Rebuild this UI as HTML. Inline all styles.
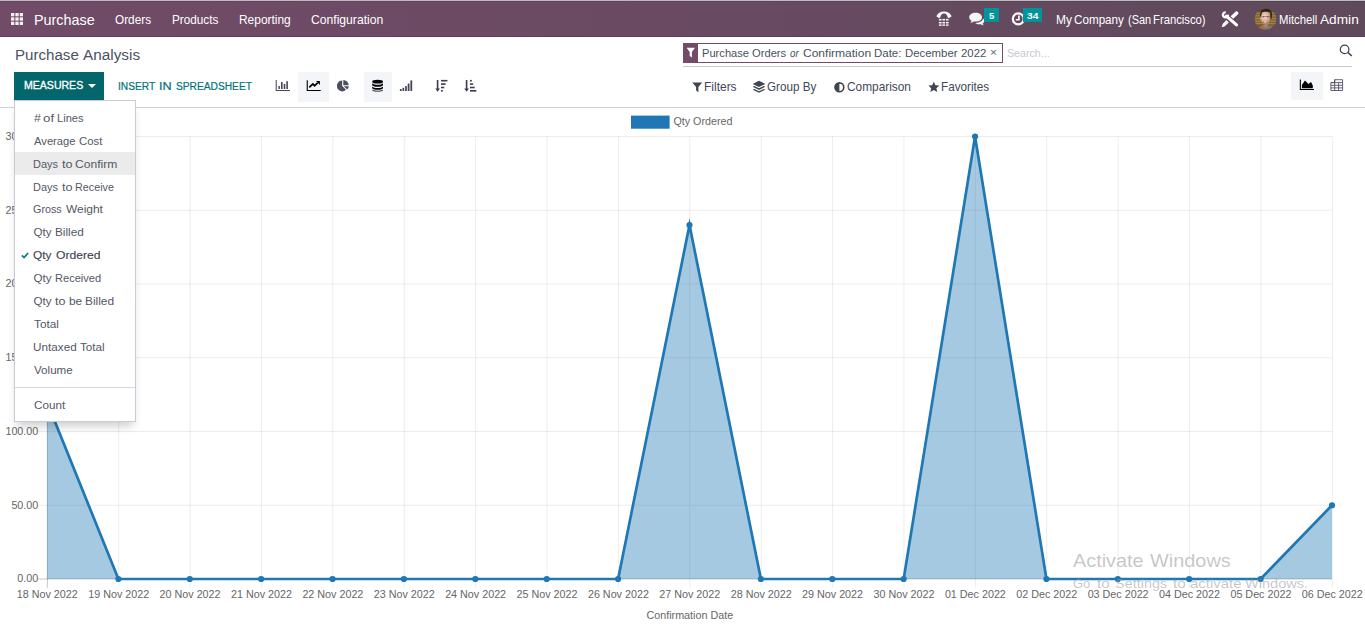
<!DOCTYPE html>
<html lang="en">
<head>
<meta charset="utf-8">
<title>Odoo - Purchase Analysis</title>
<style>
html,body{margin:0;padding:0;}
body{width:1365px;height:626px;overflow:hidden;background:#fff;position:relative;font-family:'Liberation Sans',sans-serif;}
.t{position:absolute;line-height:20px;white-space:pre;transform-origin:0 0;}
.abs{position:absolute;}
.topline{left:0;top:0;width:1365px;height:1px;background:#b9bdc0;}
.navbar{left:0;top:1px;width:1365px;height:36px;background:linear-gradient(90deg,#714b67 0%,#6b4a64 40%,#5f4a5b 100%);box-shadow:inset 0 -1px 0 rgba(60,20,50,.22), inset 0 1px 0 rgba(60,20,50,.15);}
.badge{background:#01949b;height:14px;top:8px;}
.btn-primary{left:14px;top:72px;width:90px;height:28px;background:#02666b;}
.caret{left:88px;top:84px;width:0;height:0;border-left:4px solid transparent;border-right:4px solid transparent;border-top:4px solid #fff;}
.activebg{background:#f4f5f9;top:72px;height:28px;}
.facet{left:683px;top:43px;width:318px;height:18px;border:1px solid #714b67;background:#fff;}
.facet .ic{position:absolute;left:0;top:0;width:14px;height:18px;background:#714b67;}
.searchline{left:683px;top:66px;width:669px;height:1px;background:#c9ccd3;}
.cpline{left:0;top:107px;width:1365px;height:1px;background:#cdcfd8;}
.dropdown{left:14px;top:100px;width:120px;height:320px;border:1px solid #c8cad6;background:#fff;box-shadow:0 7px 9px -3px rgba(0,0,0,.2);}
.ddhl{left:15px;top:152px;width:120px;height:23px;background:#ebebeb;}
.dddiv{left:15px;top:387px;width:120px;height:1px;background:#d5d7e0;}
svg{position:absolute;overflow:visible;}
svg.chart{left:0;top:0;}
</style>
</head>
<body>
<!-- chart -->
<svg class="chart" width="1365" height="626" viewBox="0 0 1365 626" font-family="'Liberation Sans', sans-serif" font-size="10.75" fill="#666">
<rect x="631" y="115.6" width="38.6" height="13.1" fill="#1f77b4"/>
<text x="673.4" y="124.9">Qty Ordered</text>
<g stroke-width="0.9"><line x1="38" x2="1332.00" y1="579.00" y2="579.00" stroke="rgba(0,0,0,0.25)"/><line x1="38" x2="1332.00" y1="505.25" y2="505.25" stroke="rgba(0,0,0,0.088)"/><line x1="38" x2="1332.00" y1="431.50" y2="431.50" stroke="rgba(0,0,0,0.088)"/><line x1="38" x2="1332.00" y1="357.75" y2="357.75" stroke="rgba(0,0,0,0.088)"/><line x1="38" x2="1332.00" y1="284.00" y2="284.00" stroke="rgba(0,0,0,0.088)"/><line x1="38" x2="1332.00" y1="210.25" y2="210.25" stroke="rgba(0,0,0,0.088)"/><line x1="38" x2="1332.00" y1="136.50" y2="136.50" stroke="rgba(0,0,0,0.088)"/><line x1="47.30" x2="47.30" y1="136.50" y2="587.9" stroke="rgba(0,0,0,0.25)"/><line x1="118.69" x2="118.69" y1="136.50" y2="587.9" stroke="rgba(0,0,0,0.088)"/><line x1="190.08" x2="190.08" y1="136.50" y2="587.9" stroke="rgba(0,0,0,0.088)"/><line x1="261.47" x2="261.47" y1="136.50" y2="587.9" stroke="rgba(0,0,0,0.088)"/><line x1="332.86" x2="332.86" y1="136.50" y2="587.9" stroke="rgba(0,0,0,0.088)"/><line x1="404.24" x2="404.24" y1="136.50" y2="587.9" stroke="rgba(0,0,0,0.088)"/><line x1="475.63" x2="475.63" y1="136.50" y2="587.9" stroke="rgba(0,0,0,0.088)"/><line x1="547.02" x2="547.02" y1="136.50" y2="587.9" stroke="rgba(0,0,0,0.088)"/><line x1="618.41" x2="618.41" y1="136.50" y2="587.9" stroke="rgba(0,0,0,0.088)"/><line x1="689.80" x2="689.80" y1="136.50" y2="587.9" stroke="rgba(0,0,0,0.088)"/><line x1="761.19" x2="761.19" y1="136.50" y2="587.9" stroke="rgba(0,0,0,0.088)"/><line x1="832.58" x2="832.58" y1="136.50" y2="587.9" stroke="rgba(0,0,0,0.088)"/><line x1="903.97" x2="903.97" y1="136.50" y2="587.9" stroke="rgba(0,0,0,0.088)"/><line x1="975.36" x2="975.36" y1="136.50" y2="587.9" stroke="rgba(0,0,0,0.088)"/><line x1="1046.74" x2="1046.74" y1="136.50" y2="587.9" stroke="rgba(0,0,0,0.088)"/><line x1="1118.13" x2="1118.13" y1="136.50" y2="587.9" stroke="rgba(0,0,0,0.088)"/><line x1="1189.52" x2="1189.52" y1="136.50" y2="587.9" stroke="rgba(0,0,0,0.088)"/><line x1="1260.91" x2="1260.91" y1="136.50" y2="587.9" stroke="rgba(0,0,0,0.088)"/><line x1="1332.30" x2="1332.30" y1="136.50" y2="587.9" stroke="rgba(0,0,0,0.088)"/></g>
<defs><clipPath id="ca"><rect x="40" y="135.00" width="1300" height="460"/></clipPath></defs>
<polygon points="47.00,579.00 47.00,402.00 118.39,579.00 189.78,579.00 261.17,579.00 332.56,579.00 403.94,579.00 475.33,579.00 546.72,579.00 618.11,579.00 689.50,225.00 760.89,579.00 832.28,579.00 903.67,579.00 975.06,136.50 1046.44,579.00 1117.83,579.00 1189.22,579.00 1260.61,579.00 1332.00,505.25 1332.00,579.00" fill="rgba(31,119,180,0.4)"/>
<polyline points="47.00,402.00 118.39,579.00 189.78,579.00 261.17,579.00 332.56,579.00 403.94,579.00 475.33,579.00 546.72,579.00 618.11,579.00 689.50,225.00 760.89,579.00 832.28,579.00 903.67,579.00 975.06,136.50 1046.44,579.00 1117.83,579.00 1189.22,579.00 1260.61,579.00 1332.00,505.25" fill="none" stroke="#1f77b4" stroke-width="2.7" stroke-linejoin="miter" stroke-miterlimit="10" clip-path="url(#ca)"/>
<g fill="#1f77b4"><circle cx="47.00" cy="402.00" r="3.1"/><circle cx="118.39" cy="579.00" r="3.1"/><circle cx="189.78" cy="579.00" r="3.1"/><circle cx="261.17" cy="579.00" r="3.1"/><circle cx="332.56" cy="579.00" r="3.1"/><circle cx="403.94" cy="579.00" r="3.1"/><circle cx="475.33" cy="579.00" r="3.1"/><circle cx="546.72" cy="579.00" r="3.1"/><circle cx="618.11" cy="579.00" r="3.1"/><circle cx="689.50" cy="225.00" r="3.1"/><circle cx="760.89" cy="579.00" r="3.1"/><circle cx="832.28" cy="579.00" r="3.1"/><circle cx="903.67" cy="579.00" r="3.1"/><circle cx="975.06" cy="136.50" r="3.1"/><circle cx="1046.44" cy="579.00" r="3.1"/><circle cx="1117.83" cy="579.00" r="3.1"/><circle cx="1189.22" cy="579.00" r="3.1"/><circle cx="1260.61" cy="579.00" r="3.1"/><circle cx="1332.00" cy="505.25" r="3.1"/></g>
<g text-anchor="middle"><text x="47.30" y="597.7">18 Nov 2022</text><text x="118.69" y="597.7">19 Nov 2022</text><text x="190.08" y="597.7">20 Nov 2022</text><text x="261.47" y="597.7">21 Nov 2022</text><text x="332.86" y="597.7">22 Nov 2022</text><text x="404.24" y="597.7">23 Nov 2022</text><text x="475.63" y="597.7">24 Nov 2022</text><text x="547.02" y="597.7">25 Nov 2022</text><text x="618.41" y="597.7">26 Nov 2022</text><text x="689.80" y="597.7">27 Nov 2022</text><text x="761.19" y="597.7">28 Nov 2022</text><text x="832.58" y="597.7">29 Nov 2022</text><text x="903.97" y="597.7">30 Nov 2022</text><text x="975.36" y="597.7">01 Dec 2022</text><text x="1046.74" y="597.7">02 Dec 2022</text><text x="1118.13" y="597.7">03 Dec 2022</text><text x="1189.52" y="597.7">04 Dec 2022</text><text x="1260.91" y="597.7">05 Dec 2022</text><text x="1332.30" y="597.7">06 Dec 2022</text></g>
<g text-anchor="end"><text x="38.3" y="582.40">0.00</text><text x="38.3" y="508.65">50.00</text><text x="38.3" y="434.90">100.00</text><text x="38.3" y="361.15">150.00</text><text x="38.3" y="287.40">200.00</text><text x="38.3" y="213.65">250.00</text><text x="38.3" y="139.90">300.00</text></g>
<text x="689.8" y="618.9" text-anchor="middle">Confirmation Date</text>
</svg>
<!-- watermark -->
<span class="t" style="left:1073.40px;top:550.70px;font-size:18.6px;transform:scaleX(1.0682);color:rgba(155,155,155,.56)">Activate </span>
<span class="t" style="left:1149.73px;top:550.70px;font-size:18.6px;transform:scaleX(1.0698);color:rgba(155,155,155,.56)">Windows </span>
<span class="t" style="left:1073.09px;top:573.90px;font-size:13.6px;transform:scaleX(0.9493);color:rgba(155,155,155,.56)">Go </span>
<span class="t" style="left:1097.32px;top:573.90px;font-size:13.6px;transform:scaleX(1.1143);color:rgba(155,155,155,.56)">to </span>
<span class="t" style="left:1114.60px;top:573.90px;font-size:13.6px;transform:scaleX(1.0618);color:rgba(155,155,155,.56)">Settings </span>
<span class="t" style="left:1172.82px;top:573.90px;font-size:13.6px;transform:scaleX(1.1333);color:rgba(155,155,155,.56)">to </span>
<span class="t" style="left:1189.55px;top:573.90px;font-size:13.6px;transform:scaleX(1.1016);color:rgba(155,155,155,.56)">activate </span>
<span class="t" style="left:1245.40px;top:573.90px;font-size:13.6px;transform:scaleX(1.0719);color:rgba(155,155,155,.56)">Windows. </span>

<!-- navbar -->
<div class="abs topline"></div>
<div class="abs navbar"></div>
<svg style="left:11px;top:13px" width="12" height="12" viewBox="0 0 12 12" fill="#fff" fill-opacity=".92">
<rect x="0" y="0" width="3.3" height="3.3"/><rect x="4.35" y="0" width="3.3" height="3.3"/><rect x="8.7" y="0" width="3.3" height="3.3"/>
<rect x="0" y="4.35" width="3.3" height="3.3"/><rect x="4.35" y="4.35" width="3.3" height="3.3"/><rect x="8.7" y="4.35" width="3.3" height="3.3"/>
<rect x="0" y="8.7" width="3.3" height="3.3"/><rect x="4.35" y="8.7" width="3.3" height="3.3"/><rect x="8.7" y="8.7" width="3.3" height="3.3"/>
</svg>
<!-- phone icon -->
<svg style="left:936px;top:11px" width="16" height="15" viewBox="0 0 16 15" fill="#fff">
<path d="M0.4 5.2 C1.6 1.9 4.5 0.4 8 0.4 C11.5 0.4 14.4 1.9 15.6 5.2 L13.2 7 C12.6 7.1 12 6.9 11.7 6.3 L11 4.3 C10.1 3 9 2.6 8 2.6 C7 2.6 5.9 3 5 4.3 L4.3 6.3 C4 6.9 3.4 7.1 2.8 7 Z"/>
<g fill-opacity=".95">
<rect x="2.9" y="7.9" width="2.7" height="1.6"/><rect x="6.4" y="7.9" width="2.7" height="1.6"/><rect x="9.9" y="7.9" width="2.7" height="1.6"/>
<rect x="2.9" y="10.9" width="2.7" height="1.6"/><rect x="6.4" y="10.9" width="2.7" height="1.6"/><rect x="9.9" y="10.9" width="2.7" height="1.6"/>
<rect x="2.9" y="13.4" width="2.7" height="1.4"/><rect x="6.4" y="13.4" width="2.7" height="1.4"/><rect x="9.9" y="13.4" width="2.7" height="1.4"/>
</g>
</svg>
<!-- comments icon -->
<svg style="left:968px;top:12px" width="17" height="14" viewBox="0 0 17 14">
<path d="M15 6.5 C15.9 7.2 16.3 8 16.3 8.9 C16.3 10 15.6 11 14.5 11.6 C14.8 12.3 15.3 12.8 15.9 13.2 C14.6 13.2 13.5 12.8 12.7 12.2 C12.2 12.3 11.7 12.3 11.2 12.3 C9.6 12.3 8.2 11.8 7.2 10.9 C7.4 10.9 7.5 10.9 7.6 10.9 C11.8 10.9 15 8.6 15 6.5 Z" fill="#fff" fill-opacity=".95"/>
<path d="M7.6 0.7 C11.2 0.7 14 2.7 14 5.2 C14 7.7 11.2 9.6 7.6 9.6 C7 9.6 6.4 9.5 5.8 9.4 C4.8 10.2 3.6 10.6 2.2 10.6 C2.9 10.1 3.4 9.4 3.6 8.7 C2.1 7.9 1.2 6.6 1.2 5.2 C1.2 2.7 4 0.7 7.6 0.7 Z" fill="#f8f5f7"/>
</svg>
<div class="abs badge" style="left:984px;width:15px;"></div>
<!-- clock icon -->
<svg style="left:1011px;top:12px" width="15" height="15" viewBox="0 0 15 15" fill="none" stroke="#fff">
<circle cx="7.3" cy="6.9" r="5.45" stroke-width="2.2"/>
<path d="M7.9 3.4 V7.7 H4.8" stroke-width="1.6"/>
</svg>
<div class="abs badge" style="left:1023px;width:19px;"></div>
<!-- studio icon -->
<svg style="left:1221px;top:11px" width="18" height="17" viewBox="0 0 18 17" fill="#fff">
<path d="M6.9 3.6 A2.5 2.5 0 1 1 4.7 1.4" fill="none" stroke="#fff" stroke-width="2.3"/>
<path d="M5.4 5.2 L15.5 13.9" fill="none" stroke="#fff" stroke-width="3.1" stroke-linecap="round"/>
<path d="M9.6 5.2 L14.5 0.7 C15.1 0.1 16.2 0.2 16.8 0.8 C17.6 1.6 17.6 2.6 17 3.2 L12.1 7.7 Z"/>
<path d="M5.3 8.9 L7.8 11.4 L3.8 15.3 L0.7 16.3 L1.7 13.1 Z"/>
</svg>
<!-- avatar -->
<svg style="left:1254px;top:7px" width="23" height="24" viewBox="0 0 23 24">
<defs><clipPath id="av"><circle cx="11.5" cy="11.95" r="10.8"/></clipPath>
<radialGradient id="fc" cx=".42" cy=".38" r=".68"><stop offset="0" stop-color="#f6e0d6"/><stop offset=".55" stop-color="#dcae98"/><stop offset="1" stop-color="#a87560"/></radialGradient></defs>
<g clip-path="url(#av)">
<rect width="23" height="24" fill="#81632f"/>
<rect width="23" height="4.6" fill="#5f4828"/>
<g fill="#aa8e52" fill-opacity=".75"><rect x="0" y="5.6" width="23" height="1.2"/><rect x="0" y="8.2" width="23" height="1.3"/><rect x="0" y="10.9" width="23" height="1.3"/><rect x="0" y="13.6" width="23" height="1.3"/><rect x="0" y="16" width="23" height="1.2"/></g>
<rect x="0" y="17.5" width="9" height="7" fill="#7a5a2c"/>
<path d="M6.2 9.6 C5.6 4.2 8.4 1.7 12 1.7 C16 1.7 18.4 4.2 17.9 9 L17.6 11.8 L16.1 11.5 L15.9 6.6 C13.9 5.1 10 4.7 8.3 6.1 L7.5 9.8 Z" fill="#2b2423"/>
<ellipse cx="6.7" cy="11.4" rx=".9" ry="1.5" fill="#c49680"/>
<path d="M8.6 18 L8.2 20.5 L13.5 21 L14.2 16.5 Z" fill="#b58168"/>
<path d="M7.9 5.6 C10 4.5 14.4 4.5 16.1 5.8 L16.4 11 C16.4 14.6 14.2 17.5 11.8 17.5 C9.4 17.5 6.9 14.6 6.8 11 Z" fill="url(#fc)"/>
<path d="M7.6 9.6 H15.9" stroke="#56474a" stroke-width=".8" opacity=".65"/>
<circle cx="9.7" cy="9.8" r=".75" fill="#4a3a3a" opacity=".6"/><circle cx="13.7" cy="9.8" r=".75" fill="#4a3a3a" opacity=".6"/>
<ellipse cx="11.3" cy="14.9" rx="2.3" ry="1.05" fill="#a35f55" opacity=".8"/>
<ellipse cx="11.3" cy="14.8" rx="1.6" ry=".6" fill="#fff"/>
<path d="M3 24 C4 20.2 7 18.6 9 18.3 L11.6 21.6 L11 24 Z" fill="#9a6f52"/>
<path d="M10.8 24 L11.6 21.2 L14.4 18.4 C17.2 19 19.8 20.4 20.8 24 Z" fill="#717b83"/>
</g>
</svg>
<span class="t" style="left:33.97px;top:9.60px;font-size:14.6px;transform:scaleX(0.9841);color:#fff">Purchase </span>
<span class="t" style="left:115.32px;top:10.30px;font-size:12.4px;transform:scaleX(0.9514);color:#fff">Orders </span>
<span class="t" style="left:172.05px;top:10.30px;font-size:12.4px;transform:scaleX(0.9474);color:#fff">Products </span>
<span class="t" style="left:239.04px;top:10.30px;font-size:12.4px;transform:scaleX(0.9635);color:#fff">Reporting </span>
<span class="t" style="left:311.37px;top:10.30px;font-size:12.4px;transform:scaleX(0.9799);color:#fff">Configuration </span>
<span class="t" style="left:1055.83px;top:10.00px;font-size:12.4px;transform:scaleX(0.9677);color:#fff">My </span>
<span class="t" style="left:1074.49px;top:10.00px;font-size:12.4px;transform:scaleX(0.9416);color:#fff">Company </span>
<span class="t" style="left:1127.64px;top:10.00px;font-size:12.4px;transform:scaleX(0.8848);color:#fff">(San </span>
<span class="t" style="left:1152.89px;top:10.00px;font-size:12.4px;transform:scaleX(0.9089);color:#fff">Francisco) </span>
<span class="t" style="left:1278.59px;top:10.00px;font-size:12.4px;transform:scaleX(0.9118);color:#fff">Mitchell </span>
<span class="t" style="left:1319.60px;top:10.00px;font-size:12.4px;transform:scaleX(1.1036);color:#fff">Admin </span>
<span class="t" style="left:988.64px;top:5.90px;font-size:9.2px;transform:scaleX(1.0316);color:#fff;font-weight:bold">5 </span>
<span class="t" style="left:1027.42px;top:5.90px;font-size:9.2px;transform:scaleX(1.1100);color:#fff;font-weight:bold">34 </span>

<!-- control panel -->
<div class="abs btn-primary"></div>
<div class="abs caret"></div>
<div class="abs activebg" style="left:298px;width:31px;height:29.7px"></div>
<div class="abs activebg" style="left:364px;width:28px;height:29.7px"></div>
<div class="abs activebg" style="left:1291px;width:32px;"></div>
<div class="abs facet"><div class="ic"></div></div>
<div class="abs searchline"></div>
<div class="abs cpline"></div>

<!-- bar chart -->
<svg style="left:275px;top:79px" width="16" height="13" viewBox="0 0 16 13" fill="#4a4458">
<path d="M0.7 1 H1.7 V11 H15 V12 H0.7 Z"/>
<rect x="3.4" y="7" width="1.5" height="3"/><rect x="6" y="3" width="1.6" height="7"/><rect x="8.7" y="5" width="1.6" height="5"/><rect x="11.3" y="2.2" width="1.6" height="7.8"/>
</svg>
<!-- line chart -->
<svg style="left:306px;top:79px" width="16" height="13" viewBox="0 0 16 13" fill="#000">
<path d="M0.7 1.3 H1.8 V11 H14.7 V12 H0.7 Z"/>
<path d="M3.2 8.3 L6.9 5 L8.6 6.7 L11.6 3.8" fill="none" stroke="#000" stroke-width="1.7" stroke-linejoin="miter"/>
<path d="M10 2 H13.9 V5.9 Z"/>
</svg>
<!-- pie chart -->
<svg style="left:336px;top:79px" width="15" height="13" viewBox="0 0 15 13" fill="#4a5060">
<path d="M6.2 1.6 V7 L10 10.8 A5.4 5.4 0 1 1 6.2 1.6 Z"/>
<path d="M7.3 0.9 A5.4 5.4 0 0 1 12.7 6.2 H7.3 Z"/>
<path d="M7.7 7.2 H12.9 A5.4 5.4 0 0 1 11.2 10.6 Z"/>
</svg>
<!-- database -->
<svg style="left:372px;top:79px" width="12" height="13" viewBox="0 0 12 13" fill="#000">
<ellipse cx="5.6" cy="2.7" rx="5.4" ry="1.9"/>
<path d="M0.2 4.3 C1.2 5.4 3.3 5.8 5.6 5.8 C7.9 5.8 10 5.4 11 4.3 V6 C11 7 8.6 7.8 5.6 7.8 C2.6 7.8 0.2 7 0.2 6 Z"/>
<path d="M0.2 7.4 C1.2 8.5 3.3 8.9 5.6 8.9 C7.9 8.9 10 8.5 11 7.4 V9 C11 10 8.6 10.8 5.6 10.8 C2.6 10.8 0.2 10 0.2 9 Z"/>
<path d="M0.2 10.4 C1.2 11.4 3.3 11.8 5.6 11.8 C7.9 11.8 10 11.4 11 10.4 V10.9 C11 11.9 8.6 12.5 5.6 12.5 C2.6 12.5 0.2 11.9 0.2 10.9 Z"/>
</svg>
<!-- signal -->
<svg style="left:399px;top:79px" width="14" height="13" viewBox="0 0 14 13" fill="#4a4458">
<rect x="0.9" y="10" width="1.7" height="2"/><rect x="3.5" y="8.8" width="1.7" height="3.2"/><rect x="6.1" y="7" width="1.7" height="5"/><rect x="8.7" y="4.5" width="1.8" height="7.5"/><rect x="11.4" y="1.4" width="1.8" height="10.6"/>
</svg>
<!-- sort desc -->
<svg style="left:435px;top:79px" width="13" height="14" viewBox="0 0 13 14" fill="#3f3a4e">
<path d="M1.8 0.9 H3.4 V9.6 H5 L2.6 12.7 L0.3 9.6 H1.8 Z"/>
<rect x="6" y="0.9" width="6.4" height="1.6"/><rect x="6" y="4.3" width="4.7" height="1.6"/><rect x="6" y="7.7" width="3.2" height="1.6"/><rect x="6" y="11" width="1.8" height="1.6"/>
</svg>
<!-- sort asc -->
<svg style="left:464px;top:79px" width="13" height="14" viewBox="0 0 13 14" fill="#3f3a4e">
<path d="M1.8 0.9 H3.4 V9.6 H5 L2.6 12.7 L0.3 9.6 H1.8 Z"/>
<rect x="6" y="0.9" width="1.8" height="1.6"/><rect x="6" y="4.3" width="3.2" height="1.6"/><rect x="6" y="7.7" width="4.7" height="1.6"/><rect x="6" y="11" width="6.4" height="1.6"/>
</svg>
<!-- facet funnel -->
<svg style="left:686px;top:47px" width="10" height="12" viewBox="0 0 10 12" fill="#fff">
<path d="M0.6 0.8 H9 L5.9 5 V10.6 L3.7 9 V5 Z"/>
</svg>
<!-- filter funnel -->
<svg style="left:692px;top:82px" width="11" height="11" viewBox="0 0 11 11" fill="#3f4453">
<path d="M0.3 0.5 H10.2 L6.4 4.9 V10.3 L4.1 8.6 V4.9 Z"/>
</svg>
<!-- layers -->
<svg style="left:752px;top:80px" width="14" height="14" viewBox="0 0 14 14" fill="#3f4453">
<path d="M7 0.8 L13.3 3.9 L7 7 L0.7 3.9 Z"/>
<path d="M2.3 6 L0.7 6.8 L7 9.9 L13.3 6.8 L11.7 6 L7 8.3 Z"/>
<path d="M2.3 8.9 L0.7 9.7 L7 12.8 L13.3 9.7 L11.7 8.9 L7 11.2 Z"/>
</svg>
<!-- adjust -->
<svg style="left:834px;top:82px" width="11" height="11" viewBox="0 0 11 11">
<circle cx="5.4" cy="5.3" r="4.4" fill="none" stroke="#3f4453" stroke-width="1.6"/>
<path d="M5.4 0.8 A4.5 4.5 0 0 0 5.4 9.8 Z" fill="#3f4453"/>
</svg>
<!-- star -->
<svg style="left:928px;top:81px" width="12" height="12" viewBox="0 0 12 12" fill="#3f4453">
<path d="M5.8 0.7 L7.4 4.2 L11.2 4.6 L8.4 7.2 L9.2 11 L5.8 9.1 L2.4 11 L3.2 7.2 L0.4 4.6 L4.2 4.2 Z"/>
</svg>
<!-- search -->
<svg style="left:1339px;top:44px" width="14" height="13" viewBox="0 0 14 13" fill="none" stroke="#3b4058">
<circle cx="5.6" cy="5.4" r="4.3" stroke-width="1.2"/>
<path d="M8.8 8.4 L12.8 12" stroke-width="1.5"/>
</svg>
<!-- area chart -->
<svg style="left:1299px;top:79px" width="16" height="12" viewBox="0 0 16 12" fill="#000">
<path d="M0.8 0.4 H1.9 V10 H15 V11 H0.8 Z"/>
<path d="M2.9 9.2 V6 L6 1.6 L9.4 5 L12 2.9 L13.8 6.6 V9.2 Z"/>
</svg>
<!-- pivot/table -->
<svg style="left:1330px;top:79px" width="14" height="13" viewBox="0 0 14 13" fill="none" stroke="#4a4560" stroke-width=".85">
<path d="M4.7 0.7 H12.6 V11.5 H0.9 V3.6 H4.7 Z"/>
<path d="M0.9 3.6 H12.6 M0.9 6.3 H12.6 M0.9 8.9 H12.6 M4.7 0.7 V11.5 M8.6 3.6 V11.5"/>
</svg>

<span class="t" style="left:14.56px;top:44.50px;font-size:15.2px;transform:scaleX(0.9944);color:#4b5162">Purchase </span>
<span class="t" style="left:83.00px;top:44.50px;font-size:15.2px;transform:scaleX(1.0089);color:#4b5162">Analysis </span>
<span class="t" style="left:23.72px;top:75.40px;font-size:11.7px;transform:scaleX(0.9023);color:#fff;-webkit-text-stroke:0.35px #fff">MEASURES </span>
<span class="t" style="left:118.13px;top:76.40px;font-size:11.7px;transform:scaleX(0.8723);color:#01757b;-webkit-text-stroke:0.22px #01757b">INSERT </span>
<span class="t" style="left:159.32px;top:76.40px;font-size:11.7px;transform:scaleX(1.0800);color:#01757b;-webkit-text-stroke:0.22px #01757b">IN </span>
<span class="t" style="left:176.06px;top:76.40px;font-size:11.7px;transform:scaleX(0.8728);color:#01757b;-webkit-text-stroke:0.22px #01757b">SPREADSHEET </span>
<span class="t" style="left:701.84px;top:42.75px;font-size:11.6px;transform:scaleX(0.9600);color:#4a4f5e">Purchase Orders </span>
<span class="t" style="left:790.38px;top:42.75px;font-size:11.6px;transform:scaleX(0.8488);color:#4a4f5e"><i>or</i> </span>
<span class="t" style="left:803.08px;top:42.75px;font-size:11.6px;transform:scaleX(1.0372);color:#4a4f5e">Confirmation </span>
<span class="t" style="left:874.41px;top:42.75px;font-size:11.6px;transform:scaleX(0.9903);color:#4a4f5e">Date: </span>
<span class="t" style="left:904.72px;top:42.75px;font-size:11.6px;transform:scaleX(0.9818);color:#4a4f5e">December </span>
<span class="t" style="left:960.51px;top:42.75px;font-size:11.6px;transform:scaleX(0.9818);color:#4a4f5e">2022 </span>
<span class="t" style="left:990.31px;top:42.20px;font-size:11.0px;transform:scaleX(1.0600);color:#6e6e76;-webkit-text-stroke:0.12px #6e6e76">× </span>
<span class="t" style="left:1007.24px;top:43.00px;font-size:11.7px;transform:scaleX(0.9127);color:#c6c9d0">Search... </span>
<span class="t" style="left:703.62px;top:77.30px;font-size:12.2px;transform:scaleX(0.9827);color:#434857">Filters </span>
<span class="t" style="left:767.42px;top:77.30px;font-size:12.2px;transform:scaleX(0.9569);color:#434857">Group By </span>
<span class="t" style="left:847.11px;top:77.30px;font-size:12.2px;transform:scaleX(0.9736);color:#434857">Comparison </span>
<span class="t" style="left:941.14px;top:77.30px;font-size:12.2px;transform:scaleX(0.9621);color:#434857">Favorites </span>

<!-- dropdown -->
<div class="abs dropdown"></div>
<div class="abs ddhl"></div>
<div class="abs dddiv"></div>
<svg style="left:21px;top:252px" width="8" height="7" viewBox="0 0 8 7"><path d="M0.9 3.4 L3 5.5 L7.2 1" fill="none" stroke="#017e84" stroke-width="1.7"/></svg>
<span class="t" style="left:33.50px;top:107.90px;font-size:11.6px;transform:scaleX(1.0615);color:#535866"># </span>
<span class="t" style="left:43.13px;top:107.90px;font-size:11.6px;transform:scaleX(1.1459);color:#535866">of </span>
<span class="t" style="left:57.04px;top:107.90px;font-size:11.6px;transform:scaleX(0.9562);color:#535866">Lines </span>
<span class="t" style="left:33.90px;top:130.90px;font-size:11.6px;transform:scaleX(0.9671);color:#535866">Average </span>
<span class="t" style="left:78.61px;top:130.90px;font-size:11.6px;transform:scaleX(0.9806);color:#535866">Cost </span>
<span class="t" style="left:33.46px;top:153.70px;font-size:11.6px;transform:scaleX(0.9440);color:#535866">Days </span>
<span class="t" style="left:61.53px;top:153.70px;font-size:11.6px;transform:scaleX(1.0889);color:#535866">to </span>
<span class="t" style="left:75.18px;top:153.70px;font-size:11.6px;transform:scaleX(1.0420);color:#535866">Confirm </span>
<span class="t" style="left:33.46px;top:176.70px;font-size:11.6px;transform:scaleX(0.9440);color:#535866">Days </span>
<span class="t" style="left:61.53px;top:176.70px;font-size:11.6px;transform:scaleX(1.0889);color:#535866">to </span>
<span class="t" style="left:75.47px;top:176.70px;font-size:11.6px;transform:scaleX(0.9284);color:#535866">Receive </span>
<span class="t" style="left:33.43px;top:198.90px;font-size:11.6px;transform:scaleX(0.9300);color:#535866">Gross </span>
<span class="t" style="left:65.50px;top:198.90px;font-size:11.6px;transform:scaleX(1.0294);color:#535866">Weight </span>
<span class="t" style="left:33.40px;top:221.80px;font-size:11.6px;transform:scaleX(1.0000);color:#535866">Qty </span>
<span class="t" style="left:54.88px;top:221.80px;font-size:11.6px;transform:scaleX(1.0168);color:#535866">Billed </span>
<span class="t" style="left:33.39px;top:244.80px;font-size:11.6px;transform:scaleX(1.0229);color:#3d4250;-webkit-text-stroke:0.12px #3d4250">Qty </span>
<span class="t" style="left:55.68px;top:244.80px;font-size:11.6px;transform:scaleX(1.0448);color:#3d4250;-webkit-text-stroke:0.12px #3d4250">Ordered </span>
<span class="t" style="left:33.40px;top:267.80px;font-size:11.6px;transform:scaleX(1.0000);color:#535866">Qty </span>
<span class="t" style="left:54.95px;top:267.80px;font-size:11.6px;transform:scaleX(0.9548);color:#535866">Received </span>
<span class="t" style="left:33.40px;top:290.80px;font-size:11.6px;transform:scaleX(1.0000);color:#535866">Qty </span>
<span class="t" style="left:55.23px;top:290.80px;font-size:11.6px;transform:scaleX(1.0778);color:#535866">to </span>
<span class="t" style="left:68.93px;top:290.80px;font-size:11.6px;transform:scaleX(1.0213);color:#535866">be </span>
<span class="t" style="left:84.88px;top:290.80px;font-size:11.6px;transform:scaleX(1.0243);color:#535866">Billed </span>
<span class="t" style="left:33.65px;top:313.80px;font-size:11.6px;transform:scaleX(1.0170);color:#535866">Total </span>
<span class="t" style="left:33.09px;top:336.80px;font-size:11.6px;transform:scaleX(1.0120);color:#535866">Untaxed </span>
<span class="t" style="left:79.85px;top:336.80px;font-size:11.6px;transform:scaleX(1.0085);color:#535866">Total </span>
<span class="t" style="left:33.90px;top:359.80px;font-size:11.6px;transform:scaleX(1.0013);color:#535866">Volume </span>
<span class="t" style="left:33.50px;top:394.70px;font-size:11.6px;transform:scaleX(1.0083);color:#535866">Count </span>
</body>
</html>
